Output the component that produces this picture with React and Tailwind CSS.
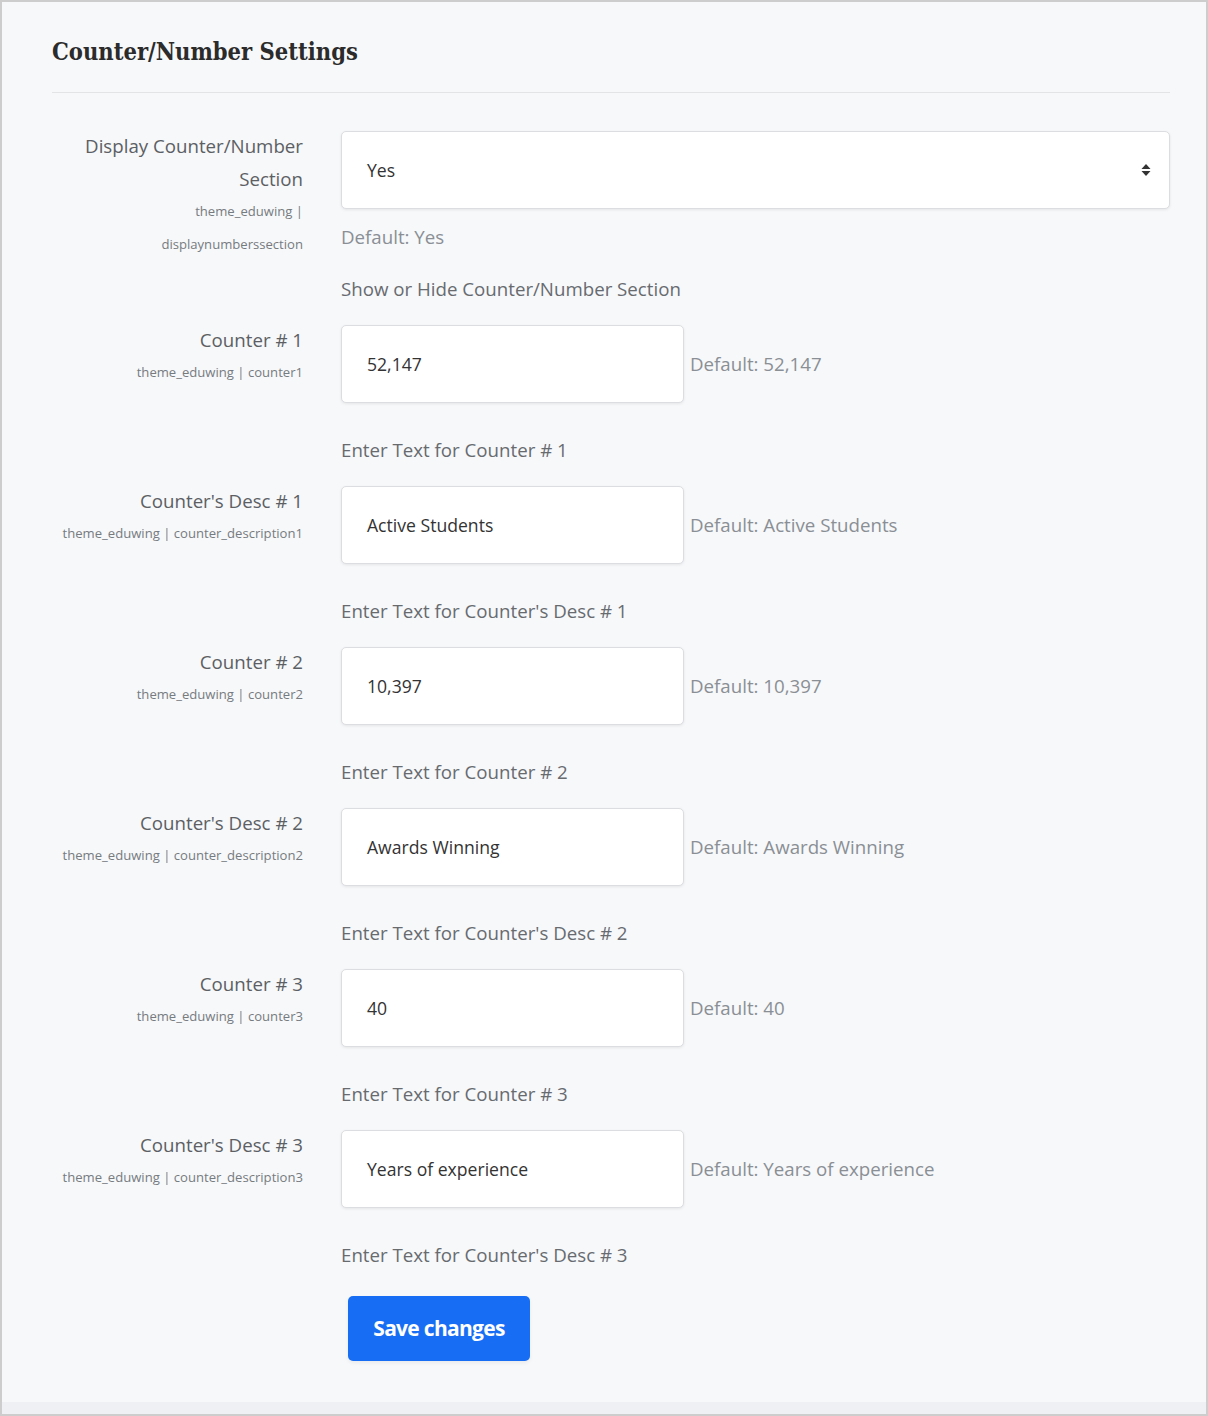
import React from "react";

const rows = [
  { label: "Counter # 1", key: "counter1", value: "52,147", help: "Enter Text for Counter # 1" },
  { label: "Counter's Desc # 1", key: "counter_description1", value: "Active Students", help: "Enter Text for Counter's Desc # 1" },
  { label: "Counter # 2", key: "counter2", value: "10,397", help: "Enter Text for Counter # 2" },
  { label: "Counter's Desc # 2", key: "counter_description2", value: "Awards Winning", help: "Enter Text for Counter's Desc # 2" },
  { label: "Counter # 3", key: "counter3", value: "40", help: "Enter Text for Counter # 3" },
  { label: "Counter's Desc # 3", key: "counter_description3", value: "Years of experience", help: "Enter Text for Counter's Desc # 3" },
];

function SelectArrows() {
  return (
    <svg width="10" height="14" viewBox="0 0 10 14" className="text-[#333]">
      <path d="M5 1 L9.5 6 H0.5 Z" fill="currentColor" />
      <path d="M5 13 L9.5 8 H0.5 Z" fill="currentColor" />
    </svg>
  );
}

function Label({ children, sub }) {
  return (
    <div className="text-right -mt-[2px]">
      <div className="text-[18.7px] leading-[33px] text-[#5c6064]">{children}</div>
      <div className="text-[13.1px] leading-[33px] text-[#767b80]">{sub}</div>
    </div>
  );
}

export default function App() {
  return (
    <div
      className="h-[1416px] border-2 border-[#cdcdcd] bg-[#f7f8fa] flex flex-col"
      style={{ fontFamily: '"Open Sans", "Noto Sans", sans-serif' }}
    >
      <div className="flex-1 pl-[50px] pr-[36px] pt-[33px]">
        <h2
          className="text-[23.5px] font-bold text-[#2b2b2b] leading-[35px]"
          style={{ fontFamily: '"DejaVu Serif Condensed", "DejaVu Serif", serif' }}
        >
          Counter/Number Settings
        </h2>
        <div className="mt-[22px] border-t border-[#e3e4e6]" />

        <div className="grid grid-cols-[251px_1fr] gap-x-[38px] mt-[38px]">
          {/* Display section */}
          <Label sub={<>theme_eduwing |<br />displaynumberssection</>}>
            Display Counter/Number<br />Section
          </Label>
          <div className="pb-[24px]">
            <div className="h-[78px] bg-white border border-[#dcdde0] rounded-[5px] shadow-[0_1px_3px_rgba(0,0,0,0.08)] flex items-center justify-between pl-[25px] pr-[18px]">
              <span className="text-[17.6px] text-[#333]">Yes</span>
              <SelectArrows />
            </div>
            <div className="mt-[16px] text-[18.7px] leading-[24px] text-[#8a8f95]">Default: Yes</div>
            <div className="mt-[28px] text-[18.7px] leading-[24px] text-[#676b70]">Show or Hide Counter/Number Section</div>
          </div>

          {rows.map((r) => (
            <React.Fragment key={r.key}>
              <Label sub={`theme_eduwing | ${r.key}`}>{r.label}</Label>
              <div className="pb-[24px]">
                <div className="flex items-center">
                  <div className="h-[78px] w-[343px] bg-white border border-[#dcdde0] rounded-[5px] shadow-[0_1px_3px_rgba(0,0,0,0.08)] flex items-center pl-[25px]">
                    <span className="text-[17.6px] text-[#333]">{r.value}</span>
                  </div>
                  <span className="ml-[6px] text-[18.7px] text-[#8a8f95]">Default: {r.value}</span>
                </div>
                <div className="mt-[35px] text-[18.7px] leading-[24px] text-[#676b70]">{r.help}</div>
              </div>
            </React.Fragment>
          ))}

          <div />
          <div className="pt-[5px]">
            <button className="ml-[7px] h-[65px] w-[182px] rounded-[5px] bg-[#176ef5] text-white text-[21px] font-bold tracking-[-0.7px] shadow-[0_2px_4px_rgba(0,0,0,0.06)]">
              Save changes
            </button>
          </div>
        </div>
      </div>
      <div className="h-[12px] bg-[#eef0f3]" />
    </div>
  );
}
